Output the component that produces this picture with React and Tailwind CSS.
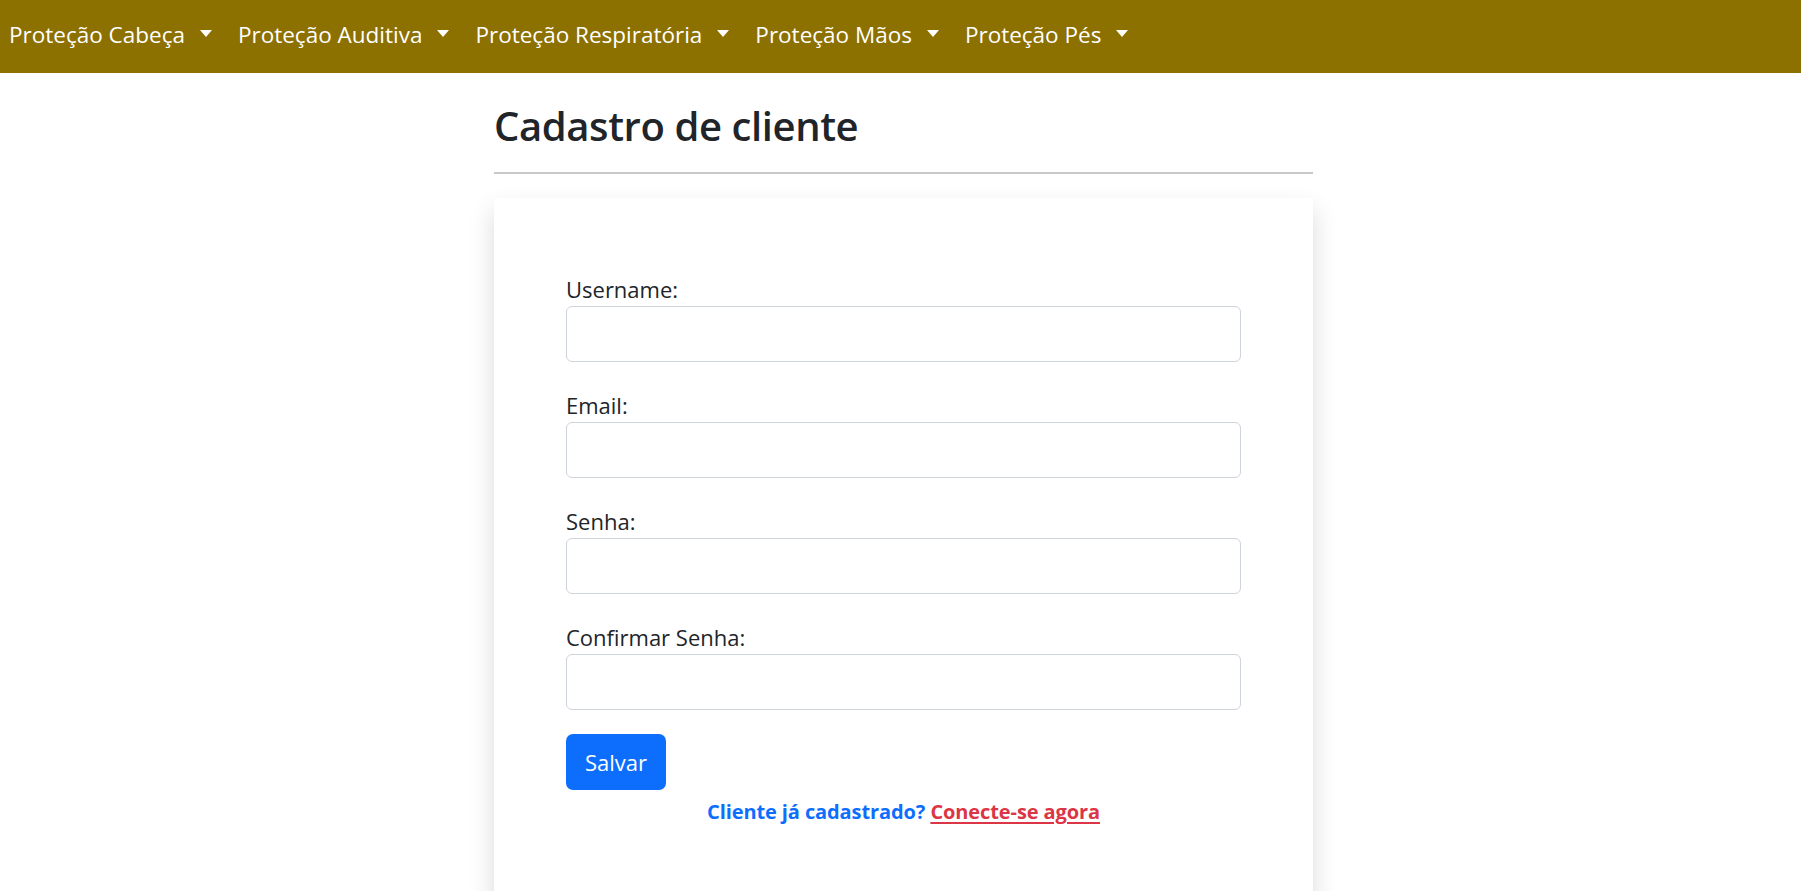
import React from "react";

const navItems = [
  "Proteção Cabeça",
  "Proteção Auditiva",
  "Proteção Respiratória",
  "Proteção Mãos",
  "Proteção Pés",
];

const fields = ["Username:", "Email:", "Senha:", "Confirmar Senha:"];

function Caret() {
  return (
    <span className="ml-[15px] mt-[-4px] inline-block h-0 w-0 border-x-[6px] border-t-[7px] border-x-transparent border-t-white" />
  );
}

export default function App() {
  return (
    <div className="min-h-screen bg-white font-['Open_Sans',sans-serif] text-[#212529]">
      <nav className="flex h-[73px] items-center gap-[26px] bg-[#8c7000] pl-[9px]">
        {navItems.map((item) => (
          <a
            key={item}
            href="#"
            className="flex items-center pb-[3px] text-[22.5px] leading-[1.5] text-white"
          >
            <span>{item}</span>
            <Caret />
          </a>
        ))}
      </nav>

      <div className="pl-[6px]">
        <main className="mx-auto w-[819px]">
          <h2 className="mt-[29px] text-[40px] font-semibold leading-[1.2] tracking-[-0.4px]">
            Cadastro de cliente
          </h2>
          <div className="mt-[22px] h-[2px] w-full bg-[#c8c8c8]" />

          <div className="mt-[24px] bg-white px-[72px] pt-[75px] pb-[110px] shadow-[0_12px_24px_rgba(0,0,0,0.15)]">
            <form className="flex flex-col" onSubmit={(e) => e.preventDefault()}>
              {fields.map((label, i) => (
                <div key={label} className={i > 0 ? "mt-[27px]" : ""}>
                  <label className="block text-[22px] leading-[33px]">
                    {label}
                  </label>
                  <input
                    type={label.startsWith("Senha") || label.startsWith("Confirmar") ? "password" : "text"}
                    className="block h-[56px] w-full rounded-[6px] border border-[#ced4da] bg-white px-[18px] text-[22px] outline-none"
                  />
                </div>
              ))}
              <div className="mt-[24px]">
                <button
                  type="submit"
                  className="h-[56px] w-[100px] rounded-[7px] bg-[#0d6efd] text-[22px] text-white"
                >
                  Salvar
                </button>
              </div>
              <p className="mt-[8px] text-center text-[20px] font-bold leading-[28px] tracking-[-0.1px] text-[#0d6efd]">
                Cliente já cadastrado?{" "}
                <a href="#" className="text-[#dc3545] underline underline-offset-[3px]">
                  Conecte-se agora
                </a>
              </p>
            </form>
          </div>
        </main>
      </div>
    </div>
  );
}
